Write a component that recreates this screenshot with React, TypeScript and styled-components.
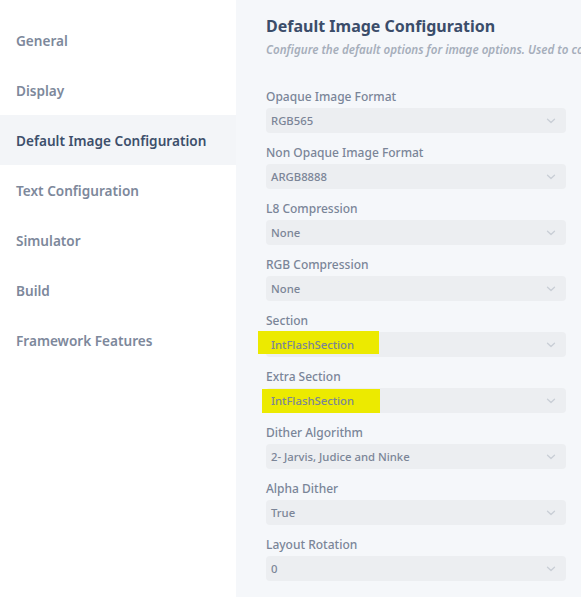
import * as React from "react";
import styled, { createGlobalStyle } from "styled-components";

const GlobalStyle = createGlobalStyle`
  html, body {
    margin: 0;
    padding: 0;
    background: #f5f7fa;
    font-family: "Noto Sans", "Open Sans", sans-serif;
  }
`;

const Layout = styled.div`
  display: flex;
  width: 581px;
  height: 597px;
  overflow: hidden;
`;

const Sidebar = styled.nav`
  width: 236px;
  flex-shrink: 0;
  background: #ffffff;
  padding-top: 15px;
  display: flex;
  flex-direction: column;
`;

const NavItem = styled.div<{ active?: boolean }>`
  height: 50px;
  display: flex;
  align-items: center;
  padding-left: 16px;
  font-size: 13.6px;
  font-weight: 600;
  color: ${(props) => (props.active ? "#3d4f6b" : "#7d889b")};
  background: ${(props) => (props.active ? "#f3f5f8" : "transparent")};
`;

const Main = styled.main`
  flex: 1;
  padding: 14px 15px 0 30px;
  min-width: 0;
  overflow: hidden;
`;

const Title = styled.h1`
  margin: 0;
  font-size: 16px;
  font-weight: 700;
  color: #3b4d6a;
  line-height: 25px;
  white-space: nowrap;
`;

const Subtitle = styled.p`
  margin: 0 0 26px;
  font-size: 11.6px;
  font-style: italic;
  font-weight: 600;
  color: #a6aebb;
  line-height: 22px;
  white-space: nowrap;
`;

const Field = styled.div`
  display: flex;
  flex-direction: column;
  margin-bottom: 10px;
`;

const Label = styled.label`
  font-size: 12px;
  font-weight: 500;
  color: #7a8598;
  line-height: 19px;
  margin-bottom: 2px;
`;

const Select = styled.div`
  position: relative;
  display: flex;
  align-items: center;
  justify-content: space-between;
  height: 25px;
  border-radius: 4px;
  background: #eceef1;
  padding: 0 10px 0 5px;
  font-size: 11.3px;
  font-weight: 500;
  color: #7b8597;
`;

const Value = styled.span`
  position: relative;
  z-index: 1;
`;

// yellow marker drawn behind a value
const Marker = styled.span<{ left: number; top: number; width: number; height: number }>`
  position: absolute;
  top: ${(props) => props.top}px;
  left: ${(props) => props.left}px;
  width: ${(props) => props.width}px;
  height: ${(props) => props.height}px;
  background: #ecea00;
`;

const Chevron = () => (
  <svg width="10" height="6" viewBox="0 0 10 6" fill="none">
    <path
      d="M1.5 1.2 L5 4.5 L8.5 1.2"
      stroke="#c9ced6"
      strokeWidth="1.3"
      strokeLinecap="round"
      strokeLinejoin="round"
    />
  </svg>
);

const navItems = [
  "General",
  "Display",
  "Default Image Configuration",
  "Text Configuration",
  "Simulator",
  "Build",
  "Framework Features",
];

type Mark = { left: number; top: number; width: number; height: number };

const fields: { label: string; value: string; mark?: Mark }[] = [
  { label: "Opaque Image Format", value: "RGB565" },
  { label: "Non Opaque Image Format", value: "ARGB8888" },
  { label: "L8 Compression", value: "None" },
  { label: "RGB Compression", value: "None" },
  {
    label: "Section",
    value: "IntFlashSection",
    mark: { left: -8, top: -1, width: 121, height: 23 },
  },
  {
    label: "Extra Section",
    value: "IntFlashSection",
    mark: { left: -4, top: 1, width: 118, height: 24 },
  },
  { label: "Dither Algorithm", value: "2- Jarvis, Judice and Ninke" },
  { label: "Alpha Dither", value: "True" },
  { label: "Layout Rotation", value: "0" },
];

export default function App() {
  return (
    <>
      <GlobalStyle />
      <Layout>
        <Sidebar>
          {navItems.map((item) => (
            <NavItem key={item} active={item === "Default Image Configuration"}>
              {item}
            </NavItem>
          ))}
        </Sidebar>
        <Main>
          <Title>Default Image Configuration</Title>
          <Subtitle>
            Configure the default options for image options. Used to configure
            images without explicit settings.
          </Subtitle>
          {fields.map((f) => (
            <Field key={f.label}>
              <Label>{f.label}</Label>
              <Select>
                {f.mark && <Marker {...f.mark} />}
                <Value>{f.value}</Value>
                <Chevron />
              </Select>
            </Field>
          ))}
        </Main>
      </Layout>
    </>
  );
}
